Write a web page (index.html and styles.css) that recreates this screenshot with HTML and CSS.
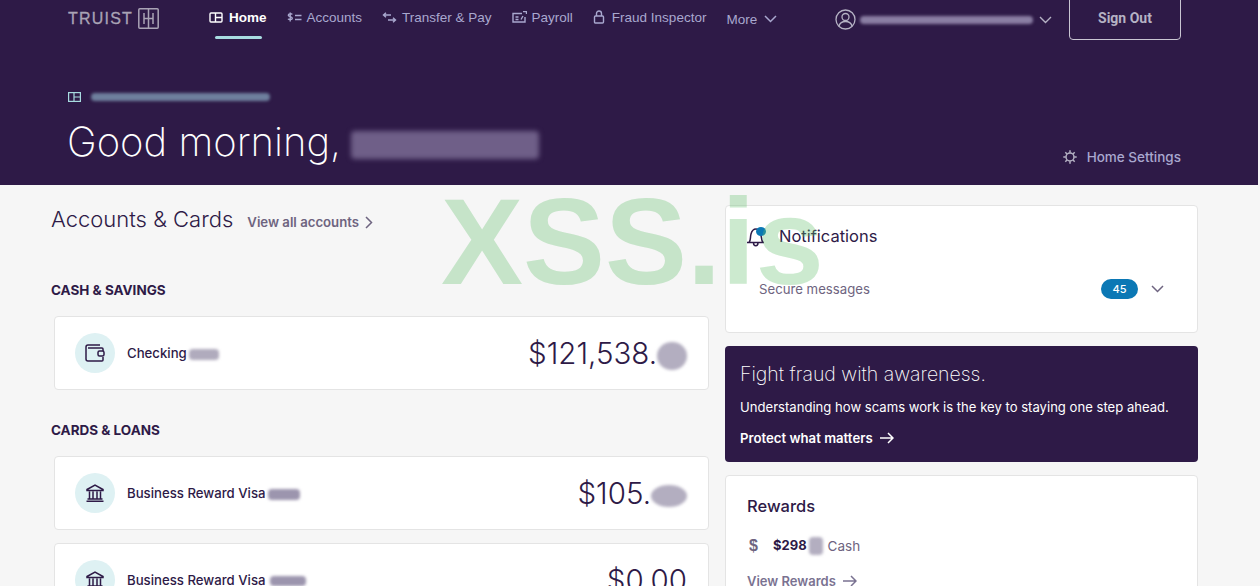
FILE: index.html
```html
<!DOCTYPE html>
<html lang="en">
<head>
<meta charset="utf-8">
<title>Truist Home</title>
<link rel="stylesheet" href="styles.css">
</head>
<body>
<div class="page">
  <header class="header">
    <div class="topbar">
      <div class="logo"><span class="logo-text">TRUIST</span>
        <svg class="logo-mark" width="21" height="21" viewBox="0 0 21 21" fill="none" stroke="currentColor" stroke-width="1.500"><rect x=".8" y=".8" width="19.400" height="19.400" rx="1"/><path d="M6 5v11M6 10.500h4.500M10.500 .8v19.400M15 5v11M10.500 10.500H15"/></svg>
      </div>
      <nav class="nav">
        <a class="nav-item active">
          <svg class="nav-icon" width="14" height="11" viewBox="0 0 14 11" fill="none" stroke="currentColor" stroke-width="1.400"><rect x="1" y="1" width="12" height="9" rx="1"/><path d="M6.500 1v9M6.500 5.500H13"/></svg>
          Home
        </a>
        <a class="nav-item">
          <svg class="nav-icon" width="15" height="11" viewBox="0 0 15 11" fill="none" stroke="currentColor" stroke-width="1.400"><path d="M5.200 2.500C4.800 1.600 1.300 1.400 1.300 3.200c0 1.900 4 1 4 3 0 1.800-3.700 1.600-4.200.5M3.200.5v9M8 3.500h6.500M8 7.500h6.500"/></svg>
          Accounts
        </a>
        <a class="nav-item">
          <svg class="nav-icon" width="15" height="11" viewBox="0 0 15 11" fill="none" stroke="currentColor" stroke-width="1.400"><path d="M9 3H1.500M4 .8 1.500 3 4 5.200M6 8h7.500M11 5.800 13.500 8 11 10.200"/></svg>
          Transfer &amp; Pay
        </a>
        <a class="nav-item">
          <svg class="nav-icon" width="15" height="12" viewBox="0 0 15 12" fill="none" stroke="currentColor" stroke-width="1.400"><path d="M10 2.500H1v8.500h12V6"/><path d="M3.500 8.500h3M3.500 6h3M9 8.500 11 5M11 .5h3.500V3"/></svg>
          Payroll
        </a>
        <a class="nav-item lock">
          <svg class="nav-icon" width="12" height="14" viewBox="0 0 12 14" fill="none" stroke="currentColor" stroke-width="1.400"><rect x="1.500" y="6" width="9" height="7" rx="1"/><path d="M3.500 6V3.500a2.500 2.500 0 0 1 5 0V6"/></svg>
          Fraud Inspector
        </a>
        <a class="nav-item more">More
          <svg width="13" height="8" viewBox="0 0 13 8" fill="none" stroke="currentColor" stroke-width="1.500"><path d="m1 1 5.500 5.500L12 1"/></svg>
        </a>
      </nav>
      <div class="user">
        <svg class="user-icon" width="21" height="21" viewBox="0 0 21 21" fill="none" stroke="currentColor" stroke-width="1.300"><circle cx="10.500" cy="10.500" r="9.500"/><circle cx="10.500" cy="8" r="3.500"/><path d="M4 17c1-3.500 3.500-4.500 6.500-4.500S16 13.500 17 17"/></svg>
        <span class="smear smear-user"></span>
        <svg class="user-chev" width="13" height="8" viewBox="0 0 13 8" fill="none" stroke="currentColor" stroke-width="1.400"><path d="m1 1 5.500 5.500L12 1"/></svg>
      </div>
      <button class="signout">Sign Out</button>
    </div>
    <div class="hero">
      <div class="hero-left">
        <div class="biz">
          <svg width="13" height="10" viewBox="0 0 13 10" fill="none" stroke="#a8dbe0" stroke-width="1.200"><rect x=".6" y=".6" width="11.800" height="8.800"/><path d="M6 .6v8.800M6 5h6.400"/></svg>
          <span class="smear smear-biz"></span>
        </div>
        <h1 class="greeting">Good morning,<span class="smear smear-name"></span></h1>
      </div>
      <a class="settings">
        <svg width="14" height="14" viewBox="0 0 14 14" fill="none" stroke="#b5b2c4" stroke-width="1.500"><circle cx="7" cy="7" r="4"/><path d="M7 .3v2.400M7 11.300v2.400M.3 7h2.400M11.300 7h2.400M2.300 2.300 4 4M10 10l1.700 1.700M2.300 11.700 4 10M10 4l1.700-1.700"/></svg>
        Home Settings
      </a>
    </div>
  </header>

  <main class="main">
    <section class="left">
      <div class="title-row">
        <h2 class="title">Accounts &amp; Cards</h2>
        <a class="view-all">View all accounts
          <svg width="8" height="13" viewBox="0 0 8 13" fill="none" stroke="currentColor" stroke-width="1.500"><path d="m1 1 5.500 5.500L1 12"/></svg>
        </a>
      </div>
      <h3 class="group first">CASH &amp; SAVINGS</h3>
      <div class="account">
        <span class="circle">
          <svg width="20" height="18" viewBox="0 0 20 18" fill="none" stroke="#2e1a47" stroke-width="1.500"><path d="M15 1H3a2 2 0 0 0-2 2v12a2 2 0 0 0 2 2h14a1 1 0 0 0 1-1v-3M18 7V5a1 1 0 0 0-1-1H3"/><rect x="13" y="7" width="6" height="5" rx="1.500"/></svg>
        </span>
        <span class="acct-name">Checking<span class="smear smear-a1"></span></span>
        <span class="amount">$121,538.<span class="smear smear-cents"></span></span>
      </div>
      <h3 class="group">CARDS &amp; LOANS</h3>
      <div class="account">
        <span class="circle">
          <svg width="18" height="18" viewBox="0 0 18 18" fill="none" stroke="#2e1a47" stroke-width="1.500"><path d="M1 5.500 9 1l8 4.500v1H1zM3.500 7.500v7M7 7.500v7M11 7.500v7M14.500 7.500v7M1.500 15h15M.5 17.200h17"/></svg>
        </span>
        <span class="acct-name">Business Reward Visa<span class="smear smear-a2"></span></span>
        <span class="amount">$105.<span class="smear smear-cents2"></span></span>
      </div>
      <div class="account second">
        <span class="circle">
          <svg width="18" height="18" viewBox="0 0 18 18" fill="none" stroke="#2e1a47" stroke-width="1.500"><path d="M1 5.500 9 1l8 4.500v1H1zM3.500 7.500v7M7 7.500v7M11 7.500v7M14.500 7.500v7M1.500 15h15M.5 17.200h17"/></svg>
        </span>
        <span class="acct-name">Business Reward Visa<span class="smear smear-a3"></span></span>
        <span class="amount">$0.00</span>
      </div>
    </section>

    <aside class="right">
      <div class="card notif">
        <div class="notif-head">
          <span class="bell">
            <svg width="20" height="21" viewBox="0 0 20 21" fill="none" stroke="#2e1a47" stroke-width="1.500"><path d="M1 16.500h17M3 16.500c2-2 1-5 2-8.500 .8-3 3-5 5-5s3.500 1.500 4.500 4c1 3 .5 7 2.500 9.500M7.500 16.800c0 4 4.500 4 4.500 0"/></svg>
            <span class="bell-dot"></span>
          </span>
          <span class="notif-title">Notifications</span>
        </div>
        <div class="notif-row">
          <span class="notif-label">Secure messages</span>
          <span class="pill">45</span>
          <svg class="notif-chev" width="13" height="8" viewBox="0 0 13 8" fill="none" stroke="#6e6480" stroke-width="1.500"><path d="m1 1 5.500 5.500L12 1"/></svg>
        </div>
      </div>
      <div class="promo">
        <h2 class="promo-title">Fight fraud with awareness.</h2>
        <p class="promo-text">Understanding how scams work is the key to staying one step ahead.</p>
        <a class="promo-link">Protect what matters
          <svg width="14" height="12" viewBox="0 0 14 12" fill="none" stroke="#fff" stroke-width="1.500"><path d="M0 6h13M8 1l5 5-5 5"/></svg>
        </a>
      </div>
      <div class="card rewards">
        <h2 class="rewards-title">Rewards</h2>
        <div class="rewards-row">
          <span class="dollar">$</span>
          <span class="rewards-amount">$298<span class="smear smear-r"></span></span>
          <span class="rewards-cash">Cash</span>
        </div>
        <a class="rewards-link">View Rewards
          <svg width="14" height="12" viewBox="0 0 14 12" fill="none" stroke="currentColor" stroke-width="1.500"><path d="M0 6h13M8 1l5 5-5 5"/></svg>
        </a>
      </div>
    </aside>
  </main>
</div>
<div class="watermark">XSS.is</div>
</body>
</html>
```
FILE: styles.css
```css
* { box-sizing: border-box; }
html, body { margin: 0; height: 586px; overflow: hidden; }
body { background: #f6f6f6; font-family: Inter, "Liberation Sans", sans-serif; color: #2e1a47; position: relative; }
h1, h2, h3, p { margin: 0; font-weight: 400; }
.page { width: 1260px; }

.header { background: #2e1a47; height: 185px; width: 1258px; }
.topbar { display: flex; align-items: flex-start; padding: 0 77px 0 68px; height: 40px; }
.logo { display: flex; align-items: center; justify-content: space-between; flex: none; width: 91px; height: 37px; color: #a9a3b5; }
.logo-text { font-family: "Liberation Sans", sans-serif; font-size: 16px; letter-spacing: 1.200px; -webkit-text-stroke: .3px currentColor; }
.logo-mark { flex: none; }
.nav { display: flex; gap: 20px; margin-left: 50px; font-family: "Liberation Sans", sans-serif; font-size: 13.500px; color: #a9a8cf; }
.nav-item { display: flex; align-items: center; gap: 5px; height: 39px; padding-bottom: 5px; position: relative; white-space: nowrap; }
.nav-icon { flex: none; }
.nav-item.active { color: #fff; font-weight: 700; gap: 6px; }
.nav-item.active::after { content: ""; position: absolute; left: 6px; right: 5px; bottom: 0; height: 3px; border-radius: 2px; background: #a8dbe0; }
.nav-item.lock { gap: 7px; }
.nav-item.more { padding-top: 4px; gap: 7px; }
.user { display: flex; align-items: center; height: 39px; margin-left: auto; color: #b5b2c4; }
.user-icon { flex: none; }
.user-chev { margin-left: 6px; }
.smear { display: inline-block; background: #776a92; border-radius: 4px; filter: blur(1.500px); vertical-align: middle; }
.smear-user { width: 173px; height: 8px; margin-left: 4px; background: #8a7ea3; }
.signout { margin: -10px 0 0 17px; width: 112px; height: 50px; padding: 6px 0 0; background: none; border: 1px solid #c9c6d2; border-radius: 4px; color: #b5b2c4; font: 700 14px Roboto, sans-serif; }

.hero { display: flex; justify-content: space-between; align-items: flex-end; padding: 50px 77px 0 67px; }
.biz { display: flex; align-items: center; gap: 10px; height: 14px; padding-left: 1px; }
.smear-biz { width: 179px; height: 8px; background: #6e7f9d; }
.greeting { margin-top: 10px; font-size: 40px; font-weight: 200; line-height: 56px; color: #fff; white-space: nowrap; }
.smear-name { width: 188px; height: 28px; margin-left: 10px; background: #6f5f88; vertical-align: -3px; filter: blur(2.500px); }
.settings { display: flex; align-items: center; gap: 10px; margin-bottom: 5px; font-size: 13.500px; font-weight: 500; color: #a9a8cf; }

.main { display: flex; width: 1198px; padding-left: 51px; }
.left { width: 658px; }
.title-row { display: flex; align-items: baseline; height: 49px; padding-top: 19px; }
.title { font-size: 22px; font-weight: 300; line-height: 30px; }
.view-all { display: flex; align-items: center; gap: 6px; margin-left: 14px; font-size: 13.200px; font-weight: 600; color: #6e6480; }
.group { margin: 32px 0 0; font-size: 13.500px; line-height: 17px; font-weight: 700; }
.group.first { margin-top: 48px; }
.account { display: flex; align-items: center; margin: 17px 0 0 3px; height: 74px; padding: 0 21px 0 20px; background: #fff; border: 1px solid #e4e4e4; border-radius: 4px; }
.account.second { margin-top: 13px; }
.circle { display: flex; align-items: center; justify-content: center; flex: none; width: 40px; height: 40px; border-radius: 50%; background: #def1f3; }
.acct-name { margin-left: 12px; font-size: 13.200px; font-weight: 500; }
.smear-a1 { width: 30px; height: 11px; background: #b0abbd; margin-left: 2px; }
.smear-a2 { width: 32px; height: 11px; background: #9c95ae; margin-left: 2px; }
.smear-a3 { width: 36px; height: 10px; background: #9c95ae; margin-left: 4px; }
.amount { margin-left: auto; font-size: 29.500px; font-weight: 300; white-space: nowrap; }
.smear-cents { width: 30px; height: 28px; background: #b3aec0; border-radius: 50%; }
.smear-cents2 { width: 36px; height: 22px; background: #b3aec0; border-radius: 50%; }

.right { width: 473px; margin-left: 16px; padding-top: 20px; display: flex; flex-direction: column; gap: 13px; }
.card { background: #fff; border: 1px solid #e4e4e4; border-radius: 4px; }
.notif { height: 128px; padding: 19px 33px 0 20px; }
.notif-head { display: flex; align-items: center; height: 22px; }
.bell { position: relative; width: 33px; height: 21px; flex: none; }
.bell-dot { position: absolute; left: 10px; top: 1px; width: 10px; height: 9px; border-radius: 50%; background: #0b78b5; }
.notif-title { font-size: 16.500px; font-weight: 400; }
.notif-row { display: flex; align-items: center; margin: 31px 0 0 13px; height: 22px; }
.notif-label { font-size: 13.200px; color: #6e6480; }
.pill { margin-left: auto; width: 37px; height: 20px; border-radius: 10px; background: #0b78b5; color: #fff; font-size: 11px; font-weight: 500; line-height: 20px; text-align: center; }
.notif-chev { margin-left: 13px; }
.promo { height: 116px; padding: 16px 15px 0; border-radius: 4px; background: #2e1a47; color: #fff; }
.promo-title { font-size: 19.500px; font-weight: 200; line-height: 24px; white-space: nowrap; }
.promo-text { margin-top: 12px; font-size: 13.100px; line-height: 18px; white-space: nowrap; }
.promo-link { display: flex; align-items: center; gap: 7px; margin-top: 14px; font-size: 13.200px; font-weight: 600; }
.rewards { height: 200px; padding: 19px 21px 0; }
.rewards-title { font-size: 16.500px; font-weight: 500; line-height: 22px; }
.rewards-row { display: flex; align-items: center; margin-top: 18px; height: 22px; font-size: 13px; }
.dollar { width: 26px; padding-left: 2px; font-size: 16px; font-weight: 700; color: #6e6480; font-family: "Liberation Sans", sans-serif; }
.rewards-amount { font-weight: 700; }
.smear-r { width: 14px; height: 18px; margin-left: 2px; background: #b3aec0; }
.rewards-cash { margin-left: 5px; font-size: 13.500px; color: #6e6480; }
.rewards-link { display: flex; align-items: center; gap: 7px; margin-top: 16px; font-size: 13px; font-weight: 600; color: #7a7291; }

.watermark { position: absolute; left: 441px; top: 171px; font-family: "Liberation Sans", sans-serif; font-size: 123px; font-weight: 700; line-height: 142px; color: rgba(100, 190, 110, .33); pointer-events: none; }
```
